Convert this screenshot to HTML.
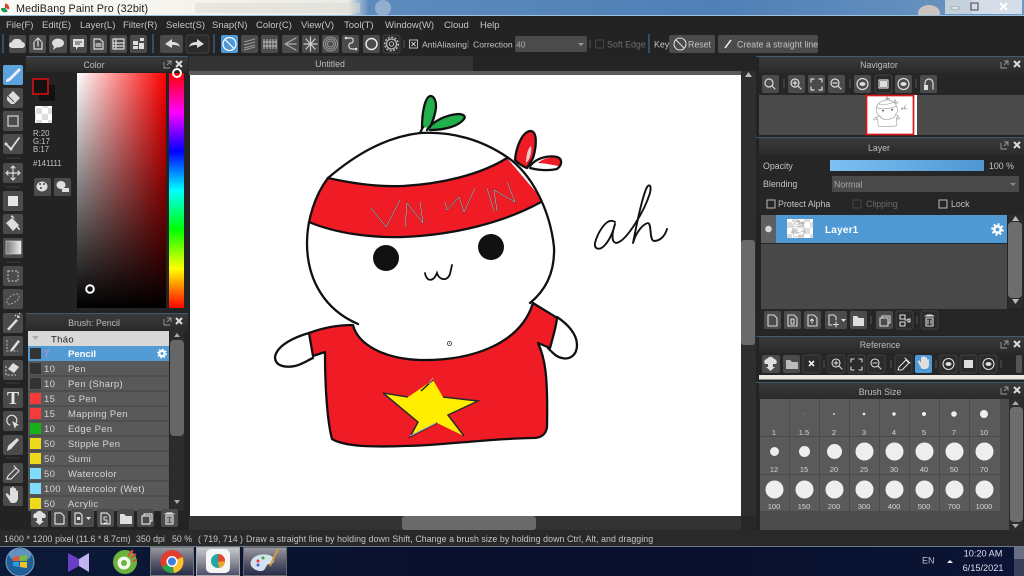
<!DOCTYPE html>
<html lang="en">
<head>
<meta charset="utf-8">
<title>MediBang Paint Pro</title>
<style>
html,body{margin:0;padding:0;background:#232323;width:1024px;height:576px;overflow:hidden}
svg{display:block;font-family:"Liberation Sans","Noto Sans CJK SC",sans-serif;filter:blur(.35px)}
text{fill:#c4c4c4;font-size:9.5px}
.b{fill:#4b4b4b}
.d{fill:#2b2b2b;stroke:#4a4a4a;stroke-width:.7}
.i{fill:none;stroke:#dcdcdc;stroke-width:1.2;stroke-linecap:round;stroke-linejoin:round}
.f{fill:#dedede;stroke:none}
.t{fill:#bdbdbd;font-size:8.8px;text-anchor:middle}
.sep{stroke:#555;stroke-width:1}
.bs{stroke:#3f6c90;stroke-width:1.2}
.row{fill:#d6d6d6;font-size:9.5px;letter-spacing:.35px}
.sz{fill:#d5d5d5;font-size:7.5px;text-anchor:middle}
.ln{fill:none;stroke:#111;stroke-width:2.3;stroke-linecap:round;stroke-linejoin:round}
</style>
</head>
<body>
<svg width="1024" height="576" viewBox="0 0 1024 576" xmlns="http://www.w3.org/2000/svg">
<defs>
<linearGradient id="title" x1="0" x2="1" y1="0" y2="0">
<stop offset="0" stop-color="#fbfaf6"/><stop offset=".17" stop-color="#f6f4ee"/><stop offset=".34" stop-color="#e9e9e6"/><stop offset=".36" stop-color="#5d8bbd"/><stop offset=".7" stop-color="#4f7fb6"/><stop offset="1" stop-color="#6e97c2"/>
</linearGradient>
<linearGradient id="head" x1="0" x2="0" y1="0" y2="1"><stop offset="0" stop-color="#3a3a3a"/><stop offset="1" stop-color="#2a2a2a"/></linearGradient>
<linearGradient id="sv1" x1="0" x2="1" y1="0" y2="0"><stop offset="0" stop-color="#fff"/><stop offset="1" stop-color="#f00"/></linearGradient>
<linearGradient id="sv2" x1="0" x2="0" y1="0" y2="1"><stop offset="0" stop-color="#000" stop-opacity="0"/><stop offset="1" stop-color="#000"/></linearGradient>
<linearGradient id="hue" x1="0" x2="0" y1="0" y2="1">
<stop offset="0" stop-color="#f00"/><stop offset=".167" stop-color="#f0f"/><stop offset=".333" stop-color="#00f"/><stop offset=".5" stop-color="#0ff"/><stop offset=".667" stop-color="#0f0"/><stop offset=".833" stop-color="#ff0"/><stop offset="1" stop-color="#f00"/>
</linearGradient>
<linearGradient id="op" x1="0" x2="1" y1="0" y2="0"><stop offset="0" stop-color="#7cc0f3"/><stop offset="1" stop-color="#4f97d2"/></linearGradient>
<linearGradient id="grad" x1="0" x2="1" y1="0" y2="0"><stop offset="0" stop-color="#777"/><stop offset="1" stop-color="#eee"/></linearGradient>
<linearGradient id="task" x1="0" x2="1" y1="0" y2="0"><stop offset="0" stop-color="#0b1a38"/><stop offset=".5" stop-color="#090f2c"/><stop offset="1" stop-color="#0b1434"/></linearGradient>
<linearGradient id="tb" x1="0" x2="0" y1="0" y2="1"><stop offset="0" stop-color="#9a9aa4"/><stop offset=".5" stop-color="#5c5c6c"/><stop offset="1" stop-color="#252a48"/></linearGradient>
<linearGradient id="tb2" x1="0" x2="0" y1="0" y2="1"><stop offset="0" stop-color="#c8c8cc"/><stop offset=".55" stop-color="#8a8a98"/><stop offset="1" stop-color="#4a4c68"/></linearGradient>
<pattern id="chk" width="12" height="12" patternUnits="userSpaceOnUse"><rect width="12" height="12" fill="#fff"/><rect width="6" height="6" fill="#ddd"/><rect x="6" y="6" width="6" height="6" fill="#ddd"/></pattern>
<g id="lines">
<path d="M328 178C355 155 385 137 420 133C452 131 482 140 507 157C532 174 550 210 554 247C555 272 546 290 530 303"/>
<path d="M328 178C315 195 307 220 307 243C307 280 325 310 358 324"/>
<path d="M328 178C355 184 380 187 403 186C440 184 480 175 507 158"/>
<path d="M309 222C335 233 370 238 403 237C455 235 505 222 541 202"/>
<path d="M353 325C358 345 385 359 420 360C470 361 520 345 533 303C542 309 550 313 557 318C556 328 552 340 550 348L538 343C545 358 548 375 547 427C546 435 540 438 533 438C480 439 440 446 403 446C375 447 345 447 332 439C327 420 325 385 325 352L313 356L309 333C325 327 340 325 353 325Z"/>
<path d="M309 333C295 337 277 345 275 357C275 366 285 368 295 366C303 364 308 360 313 358"/>
<path d="M557 317C566 323 577 333 577 345C577 355 570 360 562 358C556 357 552 352 548 348"/>
<path d="M422 128C422 112 425 96 431 96C436 97 437 106 435 113C434 118 432 123 430 127"/>
<path d="M427 130C432 122 445 115 458 114C464 114 466 117 464 119C459 126 445 130 430 130M420 133L423 127"/>
<path d="M515 160C516 148 522 131 531 131C537 132 537 145 533 158L527 168C522 166 518 163 515 160Z"/>
<path d="M530 166C536 158 548 155 557 157C563 159 562 165 557 169C548 171 538 170 530 168"/>
</g>
</defs>

<!-- window bar -->
<rect width="1024" height="15" fill="url(#title)"/>
<rect x="195" y="3" width="165" height="10" fill="#dcdad0" opacity=".5"/>
<circle cx="383" cy="8" r="8" fill="#a8bdd4" opacity=".7"/>
<ellipse cx="929" cy="13" rx="11" ry="8" fill="#c9c4be"/>
<rect y="15" width="1024" height="1" fill="#9cc0dd"/>
<rect x="945" y="0" width="77" height="14" fill="#d4dde8"/>
<rect x="945" y="0" width="27" height="14" fill="#c5d0dd"/>
<rect x="951" y="7" width="8" height="2" fill="#fff" stroke="#555" stroke-width=".4"/>
<rect x="971" y="3" width="7" height="7" fill="none" stroke="#444" stroke-width="1"/>
<path d="M1000 3l7 7m0-7l-7 7" stroke="#fff" stroke-width="2.2"/>
<circle cx="5" cy="8" r="4.5" fill="#fff"/><path d="M5 3.5a4.5 4.5 0 0 1 4 6L5 8Z" fill="#e63c2b"/><path d="M1 8a4 4 0 0 0 7 3L5 8Z" fill="#1e9c56"/>
<text x="16" y="12" style="fill:#1d1d1d;font-size:10.8px;letter-spacing:.1px">MediBang Paint Pro (32bit)</text>

<!-- menu & toolbar -->
<rect y="16" width="1024" height="40" fill="#232323"/>
<g style="fill:#c8c8c8">
<text x="6" y="28">File(F)</text><text x="42" y="28">Edit(E)</text><text x="80" y="28">Layer(L)</text><text x="123" y="28">Filter(R)</text><text x="166" y="28">Select(S)</text><text x="212" y="28">Snap(N)</text><text x="256" y="28">Color(C)</text><text x="301" y="28">View(V)</text><text x="344" y="28">Tool(T)</text><text x="385" y="28">Window(W)</text><text x="444" y="28">Cloud</text><text x="480" y="28">Help</text>
</g>
<line class="bs" x1="3" y1="34" x2="3" y2="53"/>
<g class="b">
<rect x="9" y="35" width="17" height="18" rx="2"/><rect x="29" y="35" width="17" height="18" rx="2"/><rect x="49" y="35" width="18" height="18" rx="2"/><rect x="70" y="35" width="17" height="18" rx="2"/><rect x="90" y="35" width="17" height="18" rx="2"/><rect x="110" y="35" width="17" height="18" rx="2"/><rect x="130" y="35" width="17" height="18" rx="2"/>
<rect x="160" y="35" width="23" height="18" rx="2"/>
<rect x="241" y="35" width="17" height="18" rx="2"/><rect x="261" y="35" width="17" height="18" rx="2"/><rect x="282" y="35" width="17" height="18" rx="2"/><rect x="302" y="35" width="17" height="18" rx="2"/><rect x="322" y="35" width="17" height="18" rx="2"/><rect x="342" y="35" width="17" height="18" rx="2"/><rect x="363" y="35" width="17" height="18" rx="2"/>
<rect x="669" y="35" width="46" height="18" rx="2"/><rect x="718" y="35" width="100" height="18" rx="2"/>
<rect x="515" y="36" width="72" height="16" rx="2"/>
</g>
<rect class="d" x="186" y="35" width="23" height="18" rx="2"/>
<rect class="d" x="383" y="35" width="17" height="18" rx="2"/>
<rect x="221" y="35" width="17" height="18" rx="2" fill="#4f9ad6"/>
<line class="bs" x1="153" y1="34" x2="153" y2="53"/><line class="bs" x1="214" y1="34" x2="214" y2="53"/><line class="bs" x1="649" y1="34" x2="649" y2="53"/>
<line class="sep" x1="404" y1="40" x2="404" y2="48"/><line class="sep" x1="468" y1="40" x2="468" y2="48"/><line class="sep" x1="590" y1="40" x2="590" y2="48"/>
<!-- toolbar icons -->
<path class="f" d="M12 48a3 3 0 0 1 0-6a4 4 0 0 1 5-3a4 4 0 0 1 5 3a3 3 0 0 1 0 6Z"/>
<path class="i" d="M34 42v7h8v-7M38 46v-8m-3 3l3-3l3 3"/>
<ellipse class="f" cx="58" cy="43" rx="6" ry="4.5"/><path class="f" d="M54 46l-1 4l4-3Z"/>
<path class="f" d="M73 39h11v8h-6l-2 3v-3h-3Z"/><path d="M75 42h7M75 44h5" stroke="#4b4b4b"/>
<path class="i" d="M94 39h6l3 3v7h-9ZM96 44h5M96 46h5"/>
<path class="i" d="M113 39h11v10h-11ZM113 43h11M113 46h11M116 39v10"/>
<path class="f" d="M133 41h5v4h-5ZM139 43h5v6h-5ZM133 46h5v3h-5ZM140 38h4v3h-4Z"/>
<path class="f" d="M165 44l7-5v3c4 0 7 1 8 5c-2-2-5-2-8-2v3Z"/>
<path class="f" d="M204 44l-7-5v3c-4 0-7 1-8 5c2-2 5-2 8-2v3Z"/>
<circle cx="229.500" cy="44" r="6.500" fill="none" stroke="#fff" stroke-width="1.2"/><path d="M225 39.500l9 9" stroke="#fff" stroke-width="1.2"/>
<path d="M244 42l11-3M244 45l11-3M244 48l11-3M244 50l11-3" stroke="#999"/>
<path d="M264 39v10M267 39v10M270 39v10M273 39v10M276 39v10M263 42h14M263 46h14" stroke="#bbb"/>
<path class="i" style="stroke:#aaa" d="M296 38l-11 6l11 6M296 44h-11"/>
<path class="i" style="stroke:#ccc" d="M304 44h13M310.500 37v14M306 39l9 10M315 39l-9 10"/>
<circle cx="330.500" cy="44" r="7" fill="none" stroke="#999"/><circle cx="330.500" cy="44" r="5" fill="none" stroke="#999"/><circle cx="330.500" cy="44" r="3" fill="none" stroke="#999"/>
<path class="i" d="M346 38h5c3 0 3 5 0 5s-3 6 1 6h4"/><circle class="f" cx="346" cy="38" r="1.300"/><circle class="f" cx="356" cy="49" r="1.300"/>
<circle cx="371.500" cy="44" r="5.500" fill="none" stroke="#eee" stroke-width="1.400"/>
<circle cx="391.500" cy="44" r="5" fill="none" stroke="#bbb" stroke-width="1.300"/><circle cx="391.500" cy="44" r="6.800" fill="none" stroke="#bbb" stroke-width="1.400" stroke-dasharray="2 1.500"/><circle cx="391.500" cy="44" r="2.200" fill="none" stroke="#bbb"/>
<rect x="409.500" y="40" width="8" height="8" fill="none" stroke="#bbb"/><path d="M411.500 42l4 4m0-4l-4 4" stroke="#ccc"/>
<text x="422" y="47.500" style="font-size:8.600px">AntiAliasing</text>
<text x="473" y="47.500" style="font-size:8.600px">Correction</text>
<text x="516" y="47.500" style="font-size:8.600px;fill:#aaa">40</text>
<path d="M578 43h6l-3 3Z" fill="#999"/>
<rect x="595.500" y="40" width="8" height="8" fill="none" stroke="#444"/>
<text x="607" y="47.500" style="font-size:8.800px;fill:#6e6e6e">Soft Edge</text>
<text x="654" y="47.500" style="font-size:8.800px">Key</text>
<circle cx="680" cy="44" r="6" fill="none" stroke="#ddd" stroke-width="1.100"/><path d="M676 40l8 8" stroke="#ddd" stroke-width="1.100"/>
<text x="688" y="47.500" style="font-size:8.800px">Reset</text>
<path d="M725 48l6-8" stroke="#eee" stroke-width="1.500"/>
<text x="737" y="47.500" style="font-size:8.800px">Create a straight line</text>

<!-- left toolbar -->
<g class="b">
<rect x="3" y="88" width="20" height="20" rx="2"/><rect x="3" y="111" width="20" height="20" rx="2"/><rect x="3" y="134" width="20" height="20" rx="2"/><rect x="3" y="163" width="20" height="20" rx="2"/><rect x="3" y="191" width="20" height="20" rx="2"/><rect x="3" y="214" width="20" height="20" rx="2"/><rect x="3" y="238" width="20" height="20" rx="2"/><rect x="3" y="266" width="20" height="20" rx="2"/><rect x="3" y="289" width="20" height="20" rx="2"/><rect x="3" y="313" width="20" height="20" rx="2"/><rect x="3" y="336" width="20" height="20" rx="2"/><rect x="3" y="360" width="20" height="20" rx="2"/><rect x="3" y="388" width="20" height="20" rx="2"/><rect x="3" y="411" width="20" height="20" rx="2"/><rect x="3" y="435" width="20" height="20" rx="2"/><rect x="3" y="463" width="20" height="20" rx="2"/><rect x="3" y="486" width="20" height="20" rx="2"/>
</g>
<rect x="3" y="65" width="20" height="20" rx="2" fill="#5aa3dc"/>
<path d="M19 68L9 78l2 2L21 70ZM9 78c-2 0-3 2-3 4c2 0 4-1 5-2Z" fill="#eef"/>
<path class="f" d="M13 91l7 7l-6 6h-3l-4-4v-3Z"/><path d="M8 96l6 6" stroke="#4b4b4b"/>
<rect x="8" y="116" width="10" height="10" fill="none" stroke="#bbb" stroke-width="1.500"/>
<path class="i" style="stroke-width:1.800" d="M6 144l5 5l8-11"/><circle class="f" cx="6" cy="144" r="1.500"/><circle class="f" cx="11" cy="149" r="1.500"/>
<path d="M6 158h14M6 187h14M6 262h14M6 383h14M6 458h14" stroke="#3c3c3c"/>
<path class="i" d="M13 166v14M6 173h14M11 168l2-2l2 2M11 178l2 2l2-2M8 171l-2 2l2 2M18 171l2 2l-2 2"/>
<rect x="8" y="196" width="10" height="10" fill="#e6e6e6"/>
<path class="f" d="M6 223l6-5l7 7l-6 6ZM17 225c2 2 3 4 3 5c-2 0-3-1-3-5ZM11 217c0-2 1-2 2-1l2 3"/>
<rect x="6" y="241" width="15" height="13" fill="url(#grad)" stroke="#ddd" stroke-width=".6"/>
<rect x="8" y="271" width="10" height="10" fill="none" stroke="#ccc" stroke-dasharray="2 1.500"/>
<path d="M7 303c-1-5 6-9 10-9c4 1 2 6-2 8c-3 2-7 3-8 1Z" fill="none" stroke="#aaa" stroke-dasharray="2 1.500"/>
<path class="f" d="M7 329l9-10l2 1.500l-9 10Z"/><path d="M18 315v3M20 317h-3M15 315l1 1M20 313l-1 1" stroke="#eee"/>
<path d="M7 340v11h11" fill="none" stroke="#bbb" stroke-dasharray="2 1.500"/><path class="f" d="M11 349l7-9l2 1.500l-7 9l-3 1Z"/>
<path d="M6 366v9h10" fill="none" stroke="#ccc" stroke-dasharray="2 1.500"/><path class="f" d="M13 363l6 4l-5 6l-6-4Z"/>
<text x="13" y="404" style="font-family:'Liberation Serif',serif;font-weight:bold;font-size:18px;fill:#e8e8e8;text-anchor:middle">T</text>
<path class="i" d="M10 425a5 5 0 1 1 6-2"/><path class="f" d="M12 421l7 4l-3 1l-1 3Z"/>
<path class="f" d="M7 451l1-5l9-8l2 2l-8 9Z"/>
<path class="i" d="M7 479l1-3l8-8l3 3l-8 8ZM14 466l5 5"/>
<path class="f" d="M9 500l-3-5c-1-2 1-2 2-1l2 2v-7c0-2 2-2 2 0v-1c0-2 2-2 2 0v1c0-2 2-1 2 0v2c0-1 2-1 2 1v6c0 3-2 5-4 5h-3Z"/>

<!-- color panel -->
<rect x="26" y="56" width="162" height="1" fill="#3e5a72"/>
<rect x="26" y="57" width="162" height="15" fill="url(#head)"/>
<text class="t" x="94" y="68">Color</text>
<path d="M164 62v6h6M167 61h4v4M171 61l-4 4" fill="none" stroke="#999" stroke-width=".9"/>
<path d="M176 61l6 6m0-6l-6 6" stroke="#ddd" stroke-width="2"/>
<rect x="39" y="85" width="16" height="16" fill="#141111"/>
<rect x="33" y="79" width="15" height="15" fill="#141111" stroke="#e01010" stroke-width="1.500"/>
<rect x="35" y="106" width="17" height="17" fill="url(#chk)"/>
<text x="33" y="136" style="font-size:7.800px">R:20</text><text x="33" y="144" style="font-size:7.800px">G:17</text><text x="33" y="152" style="font-size:7.800px">B:17</text>
<text x="33" y="166" style="font-size:7.800px">#141111</text>
<rect class="b" x="34" y="178" width="17" height="18" rx="2"/><rect class="b" x="54" y="178" width="17" height="18" rx="2"/>
<ellipse class="f" cx="42" cy="186.500" rx="5.500" ry="5"/><ellipse class="f" cx="61" cy="185" rx="4.500" ry="4"/><rect class="f" x="62" y="188" width="7" height="4"/>
<circle cx="40" cy="184" r="1" fill="#444"/><circle cx="44" cy="184" r="1" fill="#444"/><circle cx="41" cy="188" r="1" fill="#444"/>
<rect x="77" y="73" width="89" height="235" fill="url(#sv1)"/><rect x="77" y="73" width="89" height="235" fill="url(#sv2)"/>
<rect x="169" y="73" width="15" height="235" fill="url(#hue)"/>
<circle cx="90" cy="289" r="3.800" fill="none" stroke="#fff" stroke-width="2"/>
<circle cx="177" cy="73" r="4" fill="none" stroke="#fff" stroke-width="2"/>

<!-- brush panel -->
<rect x="26" y="313" width="162" height="1" fill="#3e5a72"/>
<rect x="26" y="314" width="162" height="17" fill="url(#head)"/>
<text class="t" x="94" y="326">Brush: Pencil</text>
<path d="M164 319v6h6M167 318h4v4M171 318l-4 4" fill="none" stroke="#999" stroke-width=".9"/>
<path d="M176 318l6 6m0-6l-6 6" stroke="#ddd" stroke-width="2"/>
<rect x="28" y="331" width="141" height="15" fill="#d8d8d8"/>
<path d="M32 336h7l-3.500 4Z" fill="#aaa"/>
<text x="51" y="342.500" class="row" style="fill:#222">Tháo</text>
<rect x="28" y="346" width="141" height="165" fill="#595959"/>
<path d="M28 376h141M28 391h141M28 406h141M28 421h141M28 436h141M28 451h141M28 466h141M28 481h141M28 496h141" stroke="#424242"/>
<rect x="28" y="346" width="141" height="15" fill="#529bd5"/>
<rect x="30" y="348" width="11" height="11" fill="#333"/>
<rect x="30" y="363" width="11" height="11" fill="#333"/><rect x="30" y="378" width="11" height="11" fill="#333"/>
<rect x="30" y="393" width="11" height="11" fill="#f43a3a"/><rect x="30" y="408" width="11" height="11" fill="#f43a3a"/>
<rect x="30" y="423" width="11" height="11" fill="#16b116"/>
<rect x="30" y="438" width="11" height="11" fill="#eeda1a"/><rect x="30" y="453" width="11" height="11" fill="#eeda1a"/>
<rect x="30" y="468" width="11" height="11" fill="#7fdcfb"/><rect x="30" y="483" width="11" height="11" fill="#7fdcfb"/>
<rect x="30" y="498" width="11" height="11" fill="#eeda1a"/>
<text x="44" y="357" class="row" style="fill:#f08ab0">7</text>
<text x="68" y="357" class="row" style="fill:#fff;font-weight:bold;letter-spacing:0">Pencil</text>
<text x="44" y="372" class="row">10</text><text x="68" y="372" class="row">Pen</text>
<text x="44" y="387" class="row">10</text><text x="68" y="387" class="row">Pen (Sharp)</text>
<text x="44" y="402" class="row">15</text><text x="68" y="402" class="row">G Pen</text>
<text x="44" y="417" class="row">15</text><text x="68" y="417" class="row">Mapping Pen</text>
<text x="44" y="432" class="row">10</text><text x="68" y="432" class="row">Edge Pen</text>
<text x="44" y="447" class="row">50</text><text x="68" y="447" class="row">Stipple Pen</text>
<text x="44" y="462" class="row">50</text><text x="68" y="462" class="row">Sumi</text>
<text x="44" y="477" class="row">50</text><text x="68" y="477" class="row">Watercolor</text>
<text x="44" y="492" class="row">100</text><text x="68" y="492" class="row">Watercolor (Wet)</text>
<text x="44" y="507" class="row">50</text><text x="68" y="507" class="row">Acrylic</text>
<circle cx="162" cy="353.500" r="2.600" fill="none" stroke="#fff" stroke-width="2.200"/><circle cx="162" cy="353.500" r="4.200" fill="none" stroke="#fff" stroke-width="1.500" stroke-dasharray="1.600 1.700"/>
<rect x="170" y="331" width="14" height="180" fill="#2c2c2c"/>
<path d="M174 337l3-4l3 4ZM174 500l3 4l3-4Z" fill="#aaa"/>
<rect x="170" y="340" width="14" height="96" rx="4" fill="#666"/>
<g class="b"><rect x="31" y="509" width="17" height="18" rx="2"/><rect x="51" y="509" width="17" height="18" rx="2"/><rect x="71" y="509" width="23" height="18" rx="2"/><rect x="97" y="509" width="17" height="18" rx="2"/><rect x="117" y="509" width="17" height="18" rx="2"/><rect x="137" y="509" width="17" height="18" rx="2"/><rect x="161" y="509" width="17" height="18" rx="2"/></g>
<path class="f" d="M34 518a3 3 0 0 1 2-5a4 4 0 0 1 7 0a3 3 0 0 1 2 5ZM37 518h5v3h2l-4.500 4l-4.500-4h2Z"/>
<path class="i" d="M55 513h6l3 3v8h-9Z"/>
<path class="i" d="M75 513h5l2 2v9h-7Z"/><rect class="f" x="77" y="517" width="3" height="3"/><path class="f" d="M86 517h5l-2.500 3Z"/>
<path class="i" d="M101 513h6l3 3v8h-9Z"/><path class="i" style="stroke-width:1" d="M107 517h-3v3h3v3h-3"/>
<path class="f" d="M120 514h4l2 2h6v8h-12Z"/>
<path class="i" d="M142 516h8v8h-8ZM144 516v-2h8v7h-2"/>
<path class="i" d="M165 514h9M167 514v-1h5v1M166 516h7v8h-7ZM168 518v4M171 518v4"/>

<!-- canvas -->
<rect x="189" y="56" width="284" height="15" fill="#343434"/>
<rect x="473" y="56" width="283" height="15" fill="#242424"/>
<text class="t" x="330" y="67">Untitled</text>
<rect x="189" y="71" width="552" height="4" fill="#5a5a5a"/>
<rect x="190" y="75" width="551" height="441" fill="#fff"/>
<rect x="741" y="71" width="15" height="445" fill="#2e2e2e"/>
<path d="M745 77l3.500-5l3.500 5Z" fill="#bbb"/>
<rect x="741" y="240" width="14" height="105" rx="3" fill="#6a6a6a"/>
<rect x="189" y="516" width="567" height="14" fill="#333"/>
<rect x="402" y="516" width="134" height="14" rx="3" fill="#6a6a6a"/>
<rect x="741" y="516" width="15" height="14" fill="#272727"/>

<!-- artwork -->
<path d="M328 178C355 184 380 187 403 186C440 184 480 175 507 158L541 198L541 202C505 222 455 235 403 237C370 238 335 233 309 222C312 205 318 190 328 178Z" fill="#ef1c25"/>
<path d="M353 325C358 345 385 359 420 360C470 361 520 345 533 303C542 309 550 313 557 318C556 328 552 340 550 348L538 343C545 358 548 375 547 427C546 435 540 438 533 438C480 439 440 446 403 446C375 447 345 447 332 439C327 420 325 385 325 352L313 356L309 333C325 327 340 325 353 325Z" fill="#ef1c25"/>
<path d="M422 128C422 112 425 96 431 96C436 97 437 106 435 113C434 118 432 123 430 127Z" fill="#21b04b"/>
<path d="M427 130C432 122 445 115 458 114C464 114 466 117 464 119C459 126 445 130 430 130Z" fill="#21b04b"/>
<path d="M515 160C516 148 522 131 531 131C537 132 537 145 533 158L527 168C522 166 518 163 515 160Z" fill="#ef1c25"/>
<path d="M526 163C526 155 528 148 531 146C532 152 530 160 526 163Z" fill="#e8c8c8"/>
<path d="M538 163C545 157 552 157 558 158C562 160 562 164 559 166C552 165 544 163 538 163Z" fill="#ef1c25"/>
<path d="M383 393L408 397L433 380L443 397L478 401L448 415L464 436L437 423L410 437L418 422Z" fill="#ffee00"/>
<use href="#lines" class="ln"/>
<path d="M383 393L408 397M433 380L421 391M443 397L478 401L448 415L464 436M437 423L410 437L418 422L383 393" fill="none" stroke="#2a2a2a" stroke-width="1.500"/>
<path d="M429 384l4-6M410 436l26-13" fill="none" stroke="#aaa" stroke-width="1"/>
<g fill="none" stroke="#5a3a3a" stroke-width="1.300">
<path d="M371 208L386 227L400 200M405 227L407 203L423 223L420 202"/>
<path d="M445 202L447 210L459 197L464 212L475 188M487 188L494 211M497 211L494 190L515 202L507 182"/>
</g>
<g fill="none" stroke="#e8d0d0" stroke-width=".5">
<path d="M371 208L386 227L400 200M405 227L407 203L423 223L420 202"/>
<path d="M445 202L447 210L459 197L464 212L475 188M487 188L494 211M497 211L494 190L515 202L507 182"/>
</g>
<circle cx="386" cy="258" r="13" fill="#111"/><circle cx="491" cy="247" r="13" fill="#111"/>
<path d="M425 273C426 281 433 283 437 273C439 280 447 282 450 274L452 265" fill="none" stroke="#111" stroke-width="1.800" stroke-linecap="round"/>
<circle cx="449.500" cy="343.500" r="2" fill="none" stroke="#222" stroke-width=".8"/><circle cx="449.500" cy="343.500" r=".5" fill="#222"/>
<path d="M615 222C606 216 597 235 595 243C594 250 600 250 604 246C610 240 613 232 615 224C612 233 611 242 616 243C626 242 644 212 650 193C652 184 648 182 645 192C640 206 636 228 633 243C636 232 643 224 648 223C652 224 649 240 654 241C660 241 665 236 667 229" fill="none" stroke="#111" stroke-width="1.900" stroke-linecap="round" stroke-linejoin="round"/>

<!-- right panels -->
<rect x="756" y="56" width="268" height="1" fill="#3e5a72"/>
<rect x="759" y="57" width="265" height="16" fill="url(#head)"/>
<text class="t" x="879" y="68">Navigator</text>
<path d="M1001 62v6h6M1004 61h4v4M1008 61l-4 4" fill="none" stroke="#999" stroke-width=".9"/>
<path d="M1014 61l6 6m0-6l-6 6" stroke="#ddd" stroke-width="2"/>
<rect x="759" y="73" width="265" height="22" fill="#262626"/>
<g class="b"><rect x="762" y="75" width="17" height="18" rx="2"/><rect x="788" y="75" width="17" height="18" rx="2"/><rect x="808" y="75" width="17" height="18" rx="2"/><rect x="828" y="75" width="17" height="18" rx="2"/><rect x="854" y="75" width="17" height="18" rx="2"/><rect x="895" y="75" width="17" height="18" rx="2"/><rect x="920" y="75" width="17" height="18" rx="2"/></g>
<rect class="d" x="875" y="75" width="17" height="18" rx="2"/>
<g class="i">
<circle cx="769" cy="83" r="4"/><path d="M772 86l3 3"/>
<circle cx="795" cy="83" r="4"/><path d="M798 86l3 3M793 83h4M795 81v4"/>
<path d="M811 79h3M811 79v3M822 79h-3M822 79v3M811 90h3M811 90v-3M822 90h-3M822 90v-3"/>
<circle cx="835" cy="83" r="4"/><path d="M838 86l3 3M833 83h4"/>
<circle cx="862.500" cy="84" r="5.500"/><circle cx="903.500" cy="84" r="5.500"/>
<path d="M879 80h9v8h-9Z"/>
<path d="M925 89v-6a4 4 0 0 1 8 0v6"/>
</g>
<ellipse class="f" cx="862.500" cy="84" rx="3" ry="2"/><ellipse class="f" cx="903.500" cy="84" rx="3" ry="2"/><rect class="f" x="880" y="81" width="7" height="6"/><rect class="f" x="924" y="85" width="4" height="5"/>
<path class="sep" d="M784 79v9M850 79v9M916 79v9"/>
<rect x="759" y="95" width="265" height="40" fill="#4a4a4a"/>
<rect x="866" y="95" width="51" height="40" fill="#fff"/>
<g transform="translate(866.300,95) scale(.0855) translate(-190,-75)" style="fill:none;stroke:#999;stroke-width:7">
<use href="#lines"/>
<circle cx="386" cy="258" r="10" fill="#333"/><circle cx="491" cy="247" r="10" fill="#333"/>
<path d="M615 222C600 225 590 250 604 246C612 240 615 230 615 224C612 242 630 240 650 190C640 206 636 228 633 243C640 224 652 224 654 241C660 241 665 236 667 229"/>
</g>
<rect x="866.500" y="95.500" width="47" height="39" fill="none" stroke="#d81818" stroke-width="1.700"/>

<rect x="756" y="137" width="268" height="1" fill="#3e5a72"/>
<rect x="759" y="138" width="265" height="17" fill="url(#head)"/>
<text class="t" x="879" y="151">Layer</text>
<path d="M1001 143v6h6M1004 142h4v4M1008 142l-4 4" fill="none" stroke="#999" stroke-width=".9"/>
<path d="M1014 142l6 6m0-6l-6 6" stroke="#ddd" stroke-width="2"/>
<rect x="759" y="155" width="265" height="60" fill="#262626"/>
<text x="763" y="169" style="font-size:8.800px">Opacity</text>
<rect x="830" y="160" width="154" height="11" fill="url(#op)"/>
<text x="989" y="169" style="font-size:8.800px">100 %</text>
<text x="763" y="187" style="font-size:8.800px">Blending</text>
<rect x="832" y="176" width="187" height="16" fill="#4a4a4a"/>
<text x="834" y="187.500" style="font-size:8.800px;fill:#aaa">Normal</text>
<path d="M1010 183h6l-3 3Z" fill="#888"/>
<rect x="767" y="200" width="8" height="8" fill="none" stroke="#bbb"/><text x="778" y="207" style="font-size:8.800px">Protect Alpha</text>
<rect x="853" y="200" width="8" height="8" fill="none" stroke="#444"/><text x="866" y="207" style="font-size:8.800px;fill:#6a6a6a">Clipping</text>
<rect x="939" y="200" width="8" height="8" fill="none" stroke="#bbb"/><text x="951" y="207" style="font-size:8.800px">Lock</text>
<rect x="761" y="215" width="15" height="28" fill="#5f5f5f"/>
<circle cx="768.500" cy="229" r="3.300" fill="#d8d8d8"/>
<rect x="776" y="215" width="231" height="28" fill="#4f9ad4"/>
<rect x="787" y="219" width="26" height="19" fill="url(#chk)"/>
<g transform="translate(787,219) scale(.047) translate(-190,-75)" style="fill:none;stroke:#aaa;stroke-width:12"><use href="#lines"/></g>
<text x="825" y="233" style="fill:#fff;font-weight:bold;font-size:10px;letter-spacing:.2px">Layer1</text>
<circle cx="997.500" cy="229.500" r="3.200" fill="none" stroke="#fff" stroke-width="2.600"/><circle cx="997.500" cy="229.500" r="5.300" fill="none" stroke="#fff" stroke-width="2" stroke-dasharray="2 2.150"/>
<rect x="761" y="243" width="246" height="1" fill="#1d2a36"/>
<rect x="761" y="244" width="246" height="65" fill="#484848"/>
<rect x="1008" y="215" width="15" height="93" fill="#2c2c2c"/>
<path d="M1012 221l3.500-5l3.500 5ZM1012 299l3.500 5l3.500-5Z" fill="#bbb"/>
<rect x="1008" y="222" width="14" height="76" rx="4" fill="#6d6d6d"/>
<rect x="759" y="309" width="265" height="26" fill="#262626"/>
<g class="b"><rect x="764" y="311" width="17" height="18" rx="2"/><rect x="784" y="311" width="17" height="18" rx="2"/><rect x="804" y="311" width="17" height="18" rx="2"/><rect x="825" y="311" width="22" height="18" rx="2"/><rect x="850" y="311" width="17" height="18" rx="2"/><rect x="876" y="311" width="17" height="18" rx="2"/></g>
<rect class="d" x="896" y="311" width="17" height="18" rx="2"/><rect class="d" x="921" y="311" width="17" height="18" rx="2"/>
<g class="i" style="stroke-width:1.100">
<path d="M768 315h6l3 3v8h-9Z"/><path d="M788 315h6l3 3v8h-9ZM791 319h3v5h-3Z"/><path d="M808 315h6l3 3v8h-9ZM812 323v-4m-1.500 1.500l1.500-1.500l1.500 1.500"/>
<path d="M829 315h5l2 2v3M829 315v10h3M836 322v5M833.500 324.500h5"/>
<path d="M880 318h8v8h-8ZM882 318v-2h8v7h-2"/>
<path d="M900 315h5v4h-5ZM900 322h5v4h-5ZM905 320h3v-1h2v3h-2v-1"/>
<path d="M925 316h9M927 316v-1h5v1M926 318h7v8h-7ZM928 320v4M931 320v4"/>
</g>
<path class="f" d="M841 319h5l-2.500 3Z"/><path class="f" d="M853 316h4l2 2h5v8h-11Z"/>
<path class="sep" d="M871 316v8M917 316v8"/>

<rect x="756" y="336" width="268" height="1" fill="#3e5a72"/>
<rect x="759" y="337" width="265" height="16" fill="url(#head)"/>
<text class="t" x="880" y="348">Reference</text>
<path d="M1001 342v6h6M1004 341h4v4M1008 341l-4 4" fill="none" stroke="#999" stroke-width=".9"/>
<path d="M1014 341l6 6m0-6l-6 6" stroke="#ddd" stroke-width="2"/>
<rect x="759" y="353" width="265" height="22" fill="#262626"/>
<g class="b"><rect x="762" y="355" width="18" height="18" rx="2"/><rect x="783" y="355" width="17" height="18" rx="2"/></g>
<g class="d"><rect x="803" y="355" width="17" height="18" rx="2"/><rect x="828" y="355" width="17" height="18" rx="2"/><rect x="848" y="355" width="17" height="18" rx="2"/><rect x="868" y="355" width="17" height="18" rx="2"/><rect x="895" y="355" width="17" height="18" rx="2"/><rect x="940" y="355" width="17" height="18" rx="2"/><rect x="960" y="355" width="17" height="18" rx="2"/><rect x="980" y="355" width="17" height="18" rx="2"/></g>
<rect x="915" y="355" width="17" height="18" rx="2" fill="#4f9ad6"/>
<path class="f" d="M765 364a3 3 0 0 1 2-5a4 4 0 0 1 7 0a3 3 0 0 1 2 5ZM768 364h5v3h2l-4.500 4l-4.500-4h2Z"/>
<path class="f" d="M786 360h4l2 2h6v7h-12Z" style="fill:#bbb"/>
<path d="M809 361l5 5m0-5l-5 5" stroke="#eee" stroke-width="1.600"/>
<g class="i" style="stroke-width:1.100">
<circle cx="836" cy="363" r="4"/><path d="M839 366l3 3M834 363h4M836 361v4"/>
<path d="M851 359h3M851 359v3M862 359h-3M862 359v3M851 370h3M851 370v-3M862 370h-3M862 370v-3"/>
<circle cx="875" cy="363" r="4"/><path d="M878 366l3 3M873 363h4"/>
<path d="M898 370l1-3l7-7l3 3l-7 7ZM905 358l5 5"/>
<circle cx="948.500" cy="364" r="5.500"/><circle cx="988.500" cy="364" r="5.500"/>
</g>
<path class="f" d="M920 366l-2-4c-1-2 1-2 2-1l1 2v-5c0-2 2-2 2 0v-1c0-1 2-1 2 0v1c0-1 2-1 2 0v2c0-1 2-1 2 0v5c0 3-2 4-4 4h-3Z"/>
<ellipse class="f" cx="948.500" cy="364" rx="3" ry="2"/><ellipse class="f" cx="988.500" cy="364" rx="3" ry="2"/><rect class="f" x="964" y="360" width="9" height="8"/>
<path class="sep" d="M824 360v8M891 360v8M936 360v8M1001 360v8"/>
<rect x="1016" y="355" width="6" height="18" rx="2" fill="#555"/>
<rect x="759" y="375" width="265" height="4.500" fill="#ece9e4"/>
<rect x="756" y="382" width="268" height="1" fill="#3e5a72"/>

<rect x="759" y="383" width="265" height="16" fill="url(#head)"/>
<text class="t" x="880" y="395">Brush Size</text>
<path d="M1001 388v6h6M1004 387h4v4M1008 387l-4 4" fill="none" stroke="#999" stroke-width=".9"/>
<path d="M1014 387l6 6m0-6l-6 6" stroke="#ddd" stroke-width="2"/>
<rect x="759" y="399" width="265" height="132" fill="#262626"/>
<rect x="760" y="399" width="249" height="132" fill="#4b4b4b"/>
<rect x="760" y="399" width="240" height="112" fill="#5a5a5a"/>
<path d="M789.500 399v112M819.500 399v112M849.500 399v112M879.500 399v112M909.500 399v112M939.500 399v112M969.500 399v112M760 436.500h240M760 474.500h240" stroke="#4a4a4a"/>
<g fill="#eeeeee">
<circle cx="804" cy="414" r=".5" opacity=".6"/><circle cx="834" cy="414" r=".9"/><circle cx="864" cy="414" r="1.300"/><circle cx="894" cy="414" r="1.700"/><circle cx="924" cy="414" r="2"/><circle cx="954" cy="414" r="2.800"/><circle cx="984" cy="414" r="4"/>
<circle cx="774.500" cy="451.500" r="4.500"/><circle cx="804.500" cy="451.500" r="5.500"/><circle cx="834.500" cy="451.500" r="7.500"/><circle cx="864.500" cy="451.500" r="9"/><circle cx="894.500" cy="451.500" r="9"/><circle cx="924.500" cy="451.500" r="9"/><circle cx="954.500" cy="451.500" r="9"/><circle cx="984.500" cy="451.500" r="9"/>
<circle cx="774.500" cy="489.500" r="9"/><circle cx="804.500" cy="489.500" r="9"/><circle cx="834.500" cy="489.500" r="9"/><circle cx="864.500" cy="489.500" r="9"/><circle cx="894.500" cy="489.500" r="9"/><circle cx="924.500" cy="489.500" r="9"/><circle cx="954.500" cy="489.500" r="9"/><circle cx="984.500" cy="489.500" r="9"/>
</g>
<g>
<text class="sz" x="774" y="435">1</text><text class="sz" x="804" y="435">1.5</text><text class="sz" x="834" y="435">2</text><text class="sz" x="864" y="435">3</text><text class="sz" x="894" y="435">4</text><text class="sz" x="924" y="435">5</text><text class="sz" x="954" y="435">7</text><text class="sz" x="984" y="435">10</text>
<text class="sz" x="774" y="472">12</text><text class="sz" x="804" y="472">15</text><text class="sz" x="834" y="472">20</text><text class="sz" x="864" y="472">25</text><text class="sz" x="894" y="472">30</text><text class="sz" x="924" y="472">40</text><text class="sz" x="954" y="472">50</text><text class="sz" x="984" y="472">70</text>
<text class="sz" x="774" y="509">100</text><text class="sz" x="804" y="509">150</text><text class="sz" x="834" y="509">200</text><text class="sz" x="864" y="509">300</text><text class="sz" x="894" y="509">400</text><text class="sz" x="924" y="509">500</text><text class="sz" x="954" y="509">700</text><text class="sz" x="984" y="509">1000</text>
</g>
<rect x="1009" y="399" width="14" height="132" fill="#2c2c2c"/>
<path d="M1012 405l3.500-4l3.500 4ZM1012 524l3.500 4l3.500-4Z" fill="#aaa"/>
<rect x="1010" y="407" width="13" height="115" rx="4" fill="#6d6d6d"/>

<!-- status -->
<rect y="530" width="1024" height="16" fill="#292929"/>
<rect y="546" width="1024" height="1" fill="#6c7a88"/>
<text x="4" y="542" style="font-size:8.800px;fill:#c6c6c6;letter-spacing:.1px">1600 * 1200 pixel</text>
<text x="76" y="542" style="font-size:8.800px;fill:#c6c6c6">(11.6 * 8.7cm)</text>
<text x="136" y="542" style="font-size:8.800px;fill:#c6c6c6">350 dpi</text>
<text x="172" y="542" style="font-size:8.800px;fill:#c6c6c6">50 %</text>
<text x="198" y="542" style="font-size:8.800px;fill:#c6c6c6">( 719, 714 )</text>
<text x="246" y="542" style="font-size:8.800px;fill:#c6c6c6;letter-spacing:.07px">Draw a straight line by holding down Shift, Change a brush size by holding down Ctrl, Alt, and dragging</text>

<!-- taskbar -->
<rect y="547" width="1024" height="29" fill="url(#task)"/>
<circle cx="20" cy="562" r="14" fill="#1f5f9c"/><circle cx="20" cy="562" r="14" fill="none" stroke="#7d9cb8" stroke-width="1"/>
<ellipse cx="20" cy="555" rx="11" ry="6" fill="#8fb5d6" opacity=".6"/>
<path d="M13 557l6-1v5h-6Z" fill="#e8562e"/><path d="M20 556l7-1v6h-7Z" fill="#7cb83a"/><path d="M13 562h6v5l-6-1Z" fill="#2e9ae0"/><path d="M20 562h7v6l-7-1Z" fill="#f3c327"/>
<path d="M68 553l11 6v7l-11 6Z" fill="#6a3fc4"/><path d="M89 553l-10 6v7l10 6Z" fill="#c3b2f2"/>
<circle cx="125" cy="562" r="12" fill="#6cb33e"/><circle cx="124" cy="563" r="6.500" fill="#f4f7ee"/><circle cx="124" cy="563" r="3" fill="#6cb33e"/>
<path d="M128 556l5-6M131 558l5-4M133 561l3-1" stroke="#e44" stroke-width="1.800"/>
<rect x="150.500" y="547.500" width="43" height="28" fill="url(#tb)" stroke="#777"/>
<rect x="196.500" y="547.500" width="43" height="28" fill="url(#tb2)" stroke="#aaa"/>
<rect x="243.500" y="547.500" width="43" height="28" fill="url(#tb)" stroke="#666"/>
<circle cx="172" cy="561.500" r="11.500" fill="#e23d2e"/>
<path d="M172 561.500L162 567a11.500 11.500 0 0 0 12 6Z" fill="#2ba24c"/><path d="M172 561.500L182.500 557a11.500 11.500 0 0 1-8.500 16Z" fill="#fbc02d"/>
<circle cx="172" cy="561.500" r="5.500" fill="#fff"/><circle cx="172" cy="561.500" r="4" fill="#3f7fe0"/>
<rect x="206" y="549" width="24" height="24" rx="5" fill="#f5f5f5"/>
<circle cx="218" cy="561" r="7" fill="#23a5a0"/><path d="M218 554a7 7 0 0 1 7 7l-7 1Z" fill="#e5452f"/><path d="M225 561a7 7 0 0 1-6 7l-1-6Z" fill="#f0a52a"/>
<path d="M253 568c-5-4-2-11 6-13c8-2 16 1 15 6c-1 4-5 2-7 4c-2 3-2 6-6 6c-3 0-6-1-8-3Z" fill="#d4e2ee"/>
<path d="M278 549l-8 17" stroke="#d69a3c" stroke-width="2"/><circle cx="258" cy="561" r="1.500" fill="#e33"/><circle cx="263" cy="558" r="1.500" fill="#3a3"/><circle cx="258" cy="565" r="1.500" fill="#36d"/>
<text x="922" y="563.500" style="font-size:9px;fill:#bcc4d0">EN</text>
<path d="M947 563h6l-3-3Z" fill="#eee"/>
<text x="983" y="556.500" style="font-size:9.200px;fill:#dde;text-anchor:middle">10:20 AM</text>
<text x="983" y="571" style="font-size:9.200px;fill:#dde;text-anchor:middle">6/15/2021</text>
<rect x="1014" y="547" width="10" height="29" fill="#3a3f5a"/>
<rect x="1014" y="547" width="10" height="12" fill="#6a6e82"/>
</svg>
</body>
</html>
